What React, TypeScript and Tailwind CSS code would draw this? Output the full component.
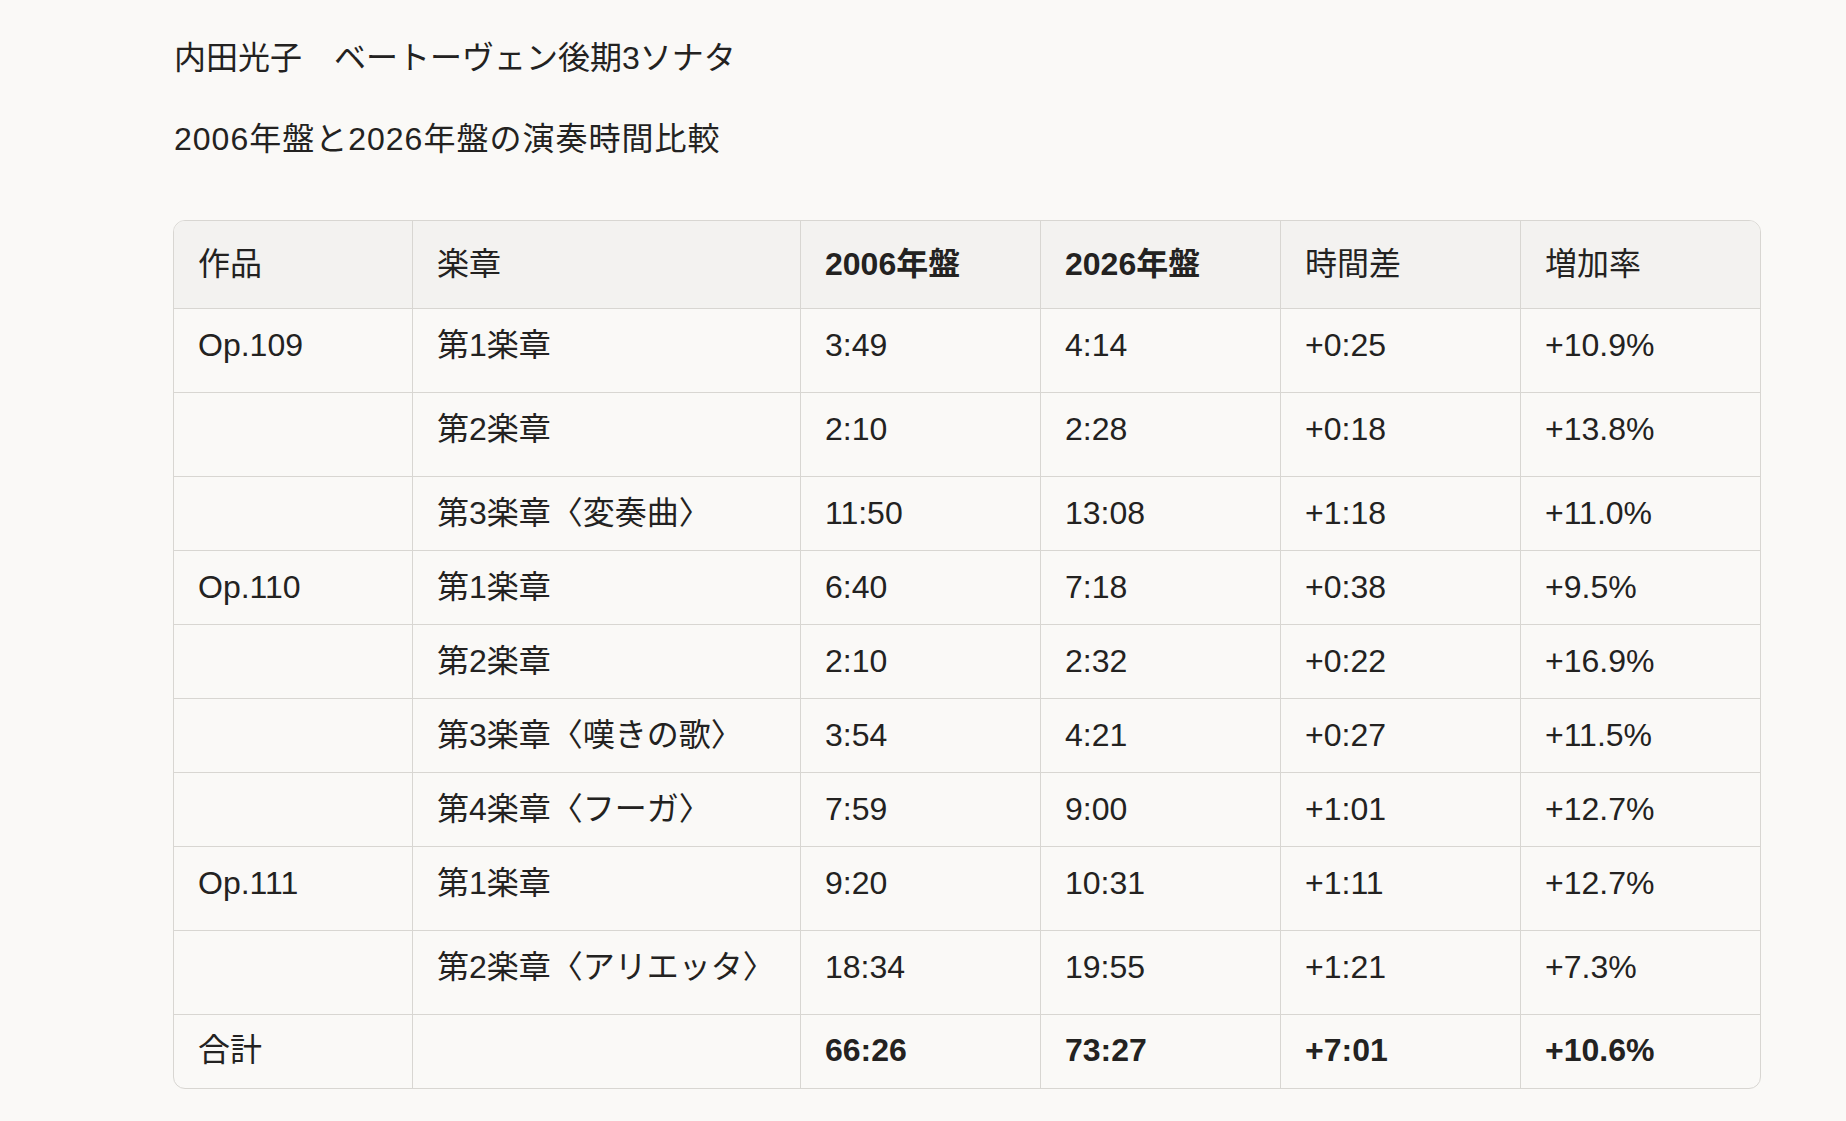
import React from 'react';

type Row = {
  work: string;
  movement: string;
  y2006: string;
  y2026: string;
  diff: string;
  rate: string;
  tall?: boolean;
};

const rows: Row[] = [
  { work: 'Op.109', movement: '第1楽章', y2006: '3:49', y2026: '4:14', diff: '+0:25', rate: '+10.9%', tall: true },
  { work: '', movement: '第2楽章', y2006: '2:10', y2026: '2:28', diff: '+0:18', rate: '+13.8%', tall: true },
  { work: '', movement: '第3楽章〈変奏曲〉', y2006: '11:50', y2026: '13:08', diff: '+1:18', rate: '+11.0%' },
  { work: 'Op.110', movement: '第1楽章', y2006: '6:40', y2026: '7:18', diff: '+0:38', rate: '+9.5%' },
  { work: '', movement: '第2楽章', y2006: '2:10', y2026: '2:32', diff: '+0:22', rate: '+16.9%' },
  { work: '', movement: '第3楽章〈嘆きの歌〉', y2006: '3:54', y2026: '4:21', diff: '+0:27', rate: '+11.5%' },
  { work: '', movement: '第4楽章〈フーガ〉', y2006: '7:59', y2026: '9:00', diff: '+1:01', rate: '+12.7%' },
  { work: 'Op.111', movement: '第1楽章', y2006: '9:20', y2026: '10:31', diff: '+1:11', rate: '+12.7%', tall: true },
  { work: '', movement: '第2楽章〈アリエッタ〉', y2006: '18:34', y2026: '19:55', diff: '+1:21', rate: '+7.3%', tall: true },
];

const cell = 'border-b border-r border-[#d8d6d2] px-[24px] pt-[12px] align-top text-left font-normal';
const lastCol = 'border-b border-[#d8d6d2] px-[24px] pt-[12px] align-top text-left font-normal';
const head = 'border-b border-r border-[#d8d6d2] px-[24px] pt-[19px] align-top text-left';
const foot = 'border-r border-[#d8d6d2] px-[24px] pt-[11px] align-top';

const App = () => {
  return (
    <div
      className="h-screen overflow-hidden bg-[#faf9f7] px-[173px] pt-[34px] text-[32px] leading-[48px] text-[#232221]"
      style={{ fontFamily: '"Liberation Sans", "Noto Sans CJK JP", sans-serif' }}
    >
      <h1 className="pl-[1px] text-[32px] font-normal">内田光子　ベートーヴェン後期3ソナタ</h1>
      <h2 className="mt-[33px] pl-[1px] text-[32px] font-normal tracking-[1px]">2006年盤と2026年盤の演奏時間比較</h2>

      <div className="mt-[57px] w-[1588px] overflow-hidden rounded-[12px] border border-[#d8d6d2]">
        <table className="w-[1586px] table-fixed border-separate border-spacing-0">
          <colgroup>
            <col className="w-[239px]" />
            <col className="w-[388px]" />
            <col className="w-[240px]" />
            <col className="w-[240px]" />
            <col className="w-[240px]" />
            <col className="w-[239px]" />
          </colgroup>
          <thead className="bg-[#f3f2f0]">
            <tr className="h-[88px]">
              <th className={`${head} font-normal`}>作品</th>
              <th className={`${head} font-normal`}>楽章</th>
              <th className={`${head} font-bold`}>2006年盤</th>
              <th className={`${head} font-bold`}>2026年盤</th>
              <th className={`${head} font-normal`}>時間差</th>
              <th className="border-b border-[#d8d6d2] px-[24px] pt-[19px] align-top text-left font-normal">増加率</th>
            </tr>
          </thead>
          <tbody>
            {rows.map((row, i) => (
              <tr key={i} className={row.tall ? 'h-[84px]' : 'h-[74px]'}>
                <td className={cell}>{row.work}</td>
                <td className={cell}>{row.movement}</td>
                <td className={cell}>{row.y2006}</td>
                <td className={cell}>{row.y2026}</td>
                <td className={cell}>{row.diff}</td>
                <td className={lastCol}>{row.rate}</td>
              </tr>
            ))}
            <tr className="h-[73px]">
              <td className={foot}>合計</td>
              <td className={foot}></td>
              <td className={`${foot} font-bold`}>66:26</td>
              <td className={`${foot} font-bold`}>73:27</td>
              <td className={`${foot} font-bold`}>+7:01</td>
              <td className="px-[24px] pt-[11px] align-top font-bold">+10.6%</td>
            </tr>
          </tbody>
        </table>
      </div>
    </div>
  );
};

export default App;
